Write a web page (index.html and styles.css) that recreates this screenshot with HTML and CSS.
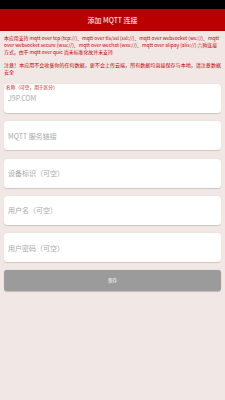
FILE: index.html
```html
<!DOCTYPE html>
<html lang="zh">

<head>
    <meta charset="UTF-8">
    <meta name="viewport" content="width=device-width, initial-scale=1.0">
    <title>添加 MQTT 连接</title>
    <link rel="stylesheet" href="styles.css">
</head>

<body>
    <div class="status"></div>
    <div class="header">添加 MQTT 连接</div>

    <div class="notice">
        <p>本应用支持 mqtt over tcp (tcp://)、mqtt over tls/ssl (ssl://)、mqtt over websocket (ws://)、mqtt over websocket secure (wss://)、mqtt over wechat (wxs://)、mqtt over alipay (alis://) 六种连接方式，由于 mqtt over quic 尚未标准化故并未支持</p>
        <p class="warn">注意！本应用不会收集你的任何数据，更不会上传云端，所有数据均直接保存与本地，请注意数据安全</p>
    </div>

    <div class="form">
        <div class="field named">
            <div class="label">名称（可空，用于区分）</div>
            <div class="value">J9P.COM</div>
        </div>
        <div class="field">
            <div class="placeholder">MQTT 服务链接</div>
        </div>
        <div class="field">
            <div class="placeholder">设备标识（可空）</div>
        </div>
        <div class="field">
            <div class="placeholder">用户名（可空）</div>
        </div>
        <div class="field">
            <div class="placeholder">用户密码（可空）</div>
        </div>
        <div class="save">保存</div>
    </div>
</body>

</html>
```

FILE: styles.css
```css
* {
    padding: 0;
    margin: 0;
    box-sizing: border-box;
}

html,
body {
    height: 100%;
    background-color: #f1e7e5;
    font-family: "Noto Sans CJK SC", "Noto Sans", sans-serif;
    overflow: hidden;
}

.status {
    height: 9px;
    background-color: black;
}

.header {
    height: 22px;
    background-color: #b80000;
    color: white;
    font-size: 7px;
    line-height: 22px;
    text-align: center;
}

.notice {
    padding: 2.5px 4px 0 4px;
    color: #c40000;
    font-size: 4.9px;
    line-height: 7px;
    display: flex;
    flex-direction: column;
    gap: 6px;
}

.notice p.warn {
    font-size: 5.05px;
}

.form {
    padding: 0 4px;
    display: flex;
    flex-direction: column;
    gap: 8.3px;
    margin-top: 9.5px;
}

.field {
    height: 29px;
    background-color: white;
    border-radius: 3px;
    box-shadow: 0 0.5px 1px rgba(0, 0, 0, 0.15);
    padding: 0 4px;
    display: flex;
    flex-direction: column;
    justify-content: center;
    color: #a8a8a8;
    font-size: 7px;
}

.field.named {
    justify-content: flex-start;
}

.label {
    color: #c40000;
    font-size: 4.7px;
    line-height: 5px;
    margin-top: 0.5px;
    margin-left: -2px;
}

.value {
    margin-top: 4.5px;
    line-height: 8px;
}

.save {
    height: 21px;
    background-color: #9b9b9b;
    border-radius: 3px;
    box-shadow: 0 0.5px 1px rgba(0, 0, 0, 0.2);
    color: white;
    font-size: 4.5px;
    line-height: 21px;
    text-align: center;
}
```
